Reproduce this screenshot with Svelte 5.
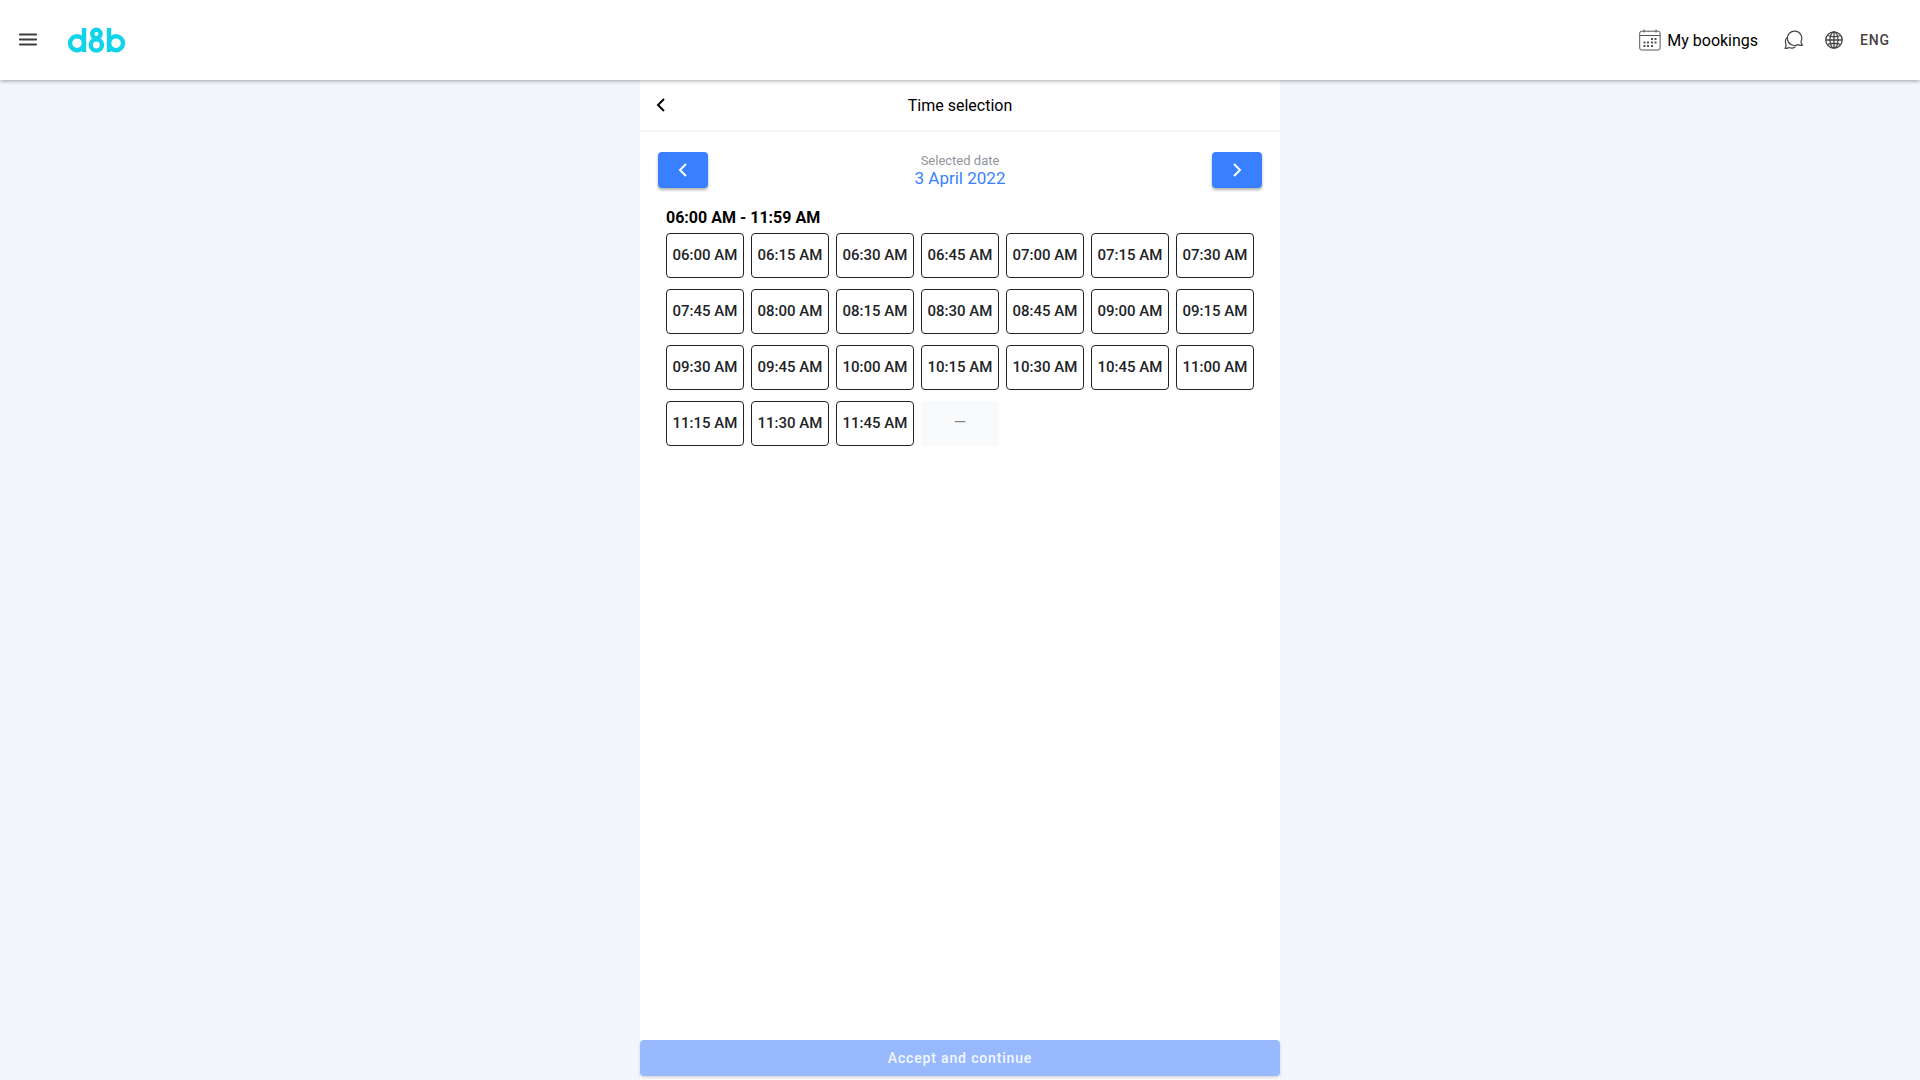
<script>
  let selected = $state(null);

  const slots = Array.from({ length: 24 }, (_, i) => {
    const minutes = 360 + i * 15;
    const hour = String(Math.floor(minutes / 60)).padStart(2, '0');
    const minute = String(minutes % 60).padStart(2, '0');
    return `${hour}:${minute} AM`;
  });
</script>

<div class="page">
  <header>
    <button class="icon-button menu" aria-label="Menu">
      <svg width="20" height="16" viewBox="0 0 20 16"><path d="M2 2.500h16M2 7.500h16M2 12.500h16" stroke="#3c3c3b" stroke-width="2.2" stroke-linecap="round" /></svg>
    </button>
    <a class="logo" href="#home" aria-label="d8b">
      <svg width="60" height="28" viewBox="0 0 60 28" fill="none" stroke="#12d3ea" stroke-width="4.400">
        <circle cx="11" cy="17.200" r="7" />
        <path d="M18 2v24" />
        <circle cx="30.400" cy="8" r="4.200" />
        <circle cx="30.400" cy="19" r="5.600" />
        <circle cx="50" cy="17.200" r="7" />
        <path d="M43 2v24" />
      </svg>
    </a>
    <nav>
      <a class="bookings" href="#bookings">
        <svg width="22" height="22" viewBox="0 0 22 22" fill="none" stroke="#555">
          <rect x="0.7" y="2.2" width="20.4" height="18.8" rx="2" />
          <path d="M1 6.5h20M5 .5v3M17 .5v3" />
          <path d="M12 10h2M15.500 10h2M4.500 13.500h2M8 13.500h2M12 13.500h2M15.500 13.500h2M4.500 17h2M8 17h2M12 17h2" stroke-width="1.800" />
        </svg>
        <span>My bookings</span>
      </a>
      <button class="icon-button chat" aria-label="Messages">
        <svg width="20" height="20" viewBox="0 0 20 20" fill="none" stroke="#444" stroke-width="1.2" stroke-linejoin="round" stroke-linecap="round">
          <path d="M14 14.600A7.200 7.200 0 1 1 17 11.500Q16.900 13.700 18.500 15.200Q16 15.700 14 14.600Z" />
          <path d="M2.500 8Q.6 11 2 14.500Q2.400 16.600 1 18.300Q3.500 18.700 5.200 17.500Q8.300 18.800 11 17.200" />
        </svg>
      </button>
      <button class="language">
        <svg width="18" height="18" viewBox="0 0 18 18" fill="none" stroke="#444" stroke-width="1.3">
          <circle cx="9" cy="9" r="8.200" /><ellipse cx="9" cy="9" rx="4" ry="8.200" />
          <path d="M9 .8v16.400M.8 9h16.400M2.500 4.500Q9 7 15.500 4.500M2.500 13.500Q9 11 15.500 13.500" />
        </svg>
        <span>ENG</span>
      </button>
    </nav>
  </header>

  <main>
    <div class="title-bar">
      <button class="icon-button" aria-label="Back">
        <svg width="10" height="14" viewBox="0 0 10 14" fill="none" stroke="#000" stroke-width="2"><path d="M8 1 2 7l6 6" /></svg>
      </button>
      <h1>Time selection</h1>
    </div>

    <div class="date-bar">
      <button class="step" aria-label="Previous day">
        <svg width="10" height="14" viewBox="0 0 10 14" fill="none" stroke="#fff" stroke-width="2"><path d="M8 1 2 7l6 6" /></svg>
      </button>
      <div class="date">
        <span class="caption">Selected date</span>
        <span class="value">3 April 2022</span>
      </div>
      <button class="step" aria-label="Next day">
        <svg width="10" height="14" viewBox="0 0 10 14" fill="none" stroke="#fff" stroke-width="2"><path d="m2 1 6 6-6 6" /></svg>
      </button>
    </div>

    <section>
      <h2>06:00 AM - 11:59 AM</h2>
      <div class="slots">
        {#each slots as slot}
          <button class="slot" class:selected={selected === slot} onclick={() => (selected = slot)}>{slot}</button>
        {/each}
        <div class="slot empty">—</div>
      </div>
    </section>

    <button class="accept" disabled={!selected}>Accept and continue</button>
  </main>
</div>

<style>
  :global(body) { background: #f3f5fa; }
  .page {
    display: flex;
    flex-direction: column;
    min-height: 100vh;
    font-family: Roboto, sans-serif;
    font-size: 16px;
    color: #000;
  }
  button { font: inherit; color: inherit; border: 0; padding: 0; background: none; cursor: pointer; }
  a { color: inherit; text-decoration: none; }
  svg { display: block; }
  header {
    display: flex;
    align-items: center;
    height: 80px;
    box-sizing: border-box;
    padding: 0 30px 0 18px;
    background: #fff;
    box-shadow: 0 1px 4px rgba(0, 0, 0, 0.35);
    z-index: 1;
  }
  .logo { margin-left: 28px; }
  nav { display: flex; align-items: center; margin-left: auto; }
  .bookings { display: flex; align-items: center; gap: 6px; }
  .chat { margin-left: 26px; }
  .language {
    display: flex;
    align-items: center;
    gap: 17px;
    margin-left: 21px;
    font-size: 14px;
    font-weight: 500;
    letter-spacing: 0.06em;
    color: #444;
  }
  main {
    flex: 1;
    display: flex;
    flex-direction: column;
    width: 100%;
    max-width: 640px;
    box-sizing: border-box;
    margin: 0 auto;
    background: #fff;
  }
  .title-bar {
    display: grid;
    grid-template-columns: 30px 1fr 30px;
    align-items: center;
    height: 52px;
    box-sizing: border-box;
    padding: 0 6px;
    border-bottom: 2px solid #f3f5fa;
  }
  .title-bar .icon-button { justify-self: center; }
  h1, h2 { margin: 0; font-size: 16px; line-height: 20px; }
  h1 { padding-top: 2px; font-weight: 400; text-align: center; }
  .date-bar { display: flex; justify-content: space-between; align-items: center; padding: 20px 18px; }
  .step {
    display: grid;
    place-items: center;
    width: 50px;
    height: 36px;
    border-radius: 4px;
    background: #3880ff;
    box-shadow: 0 2px 3px rgba(0, 0, 0, 0.3);
  }
  .date { display: flex; flex-direction: column; align-items: center; }
  .caption { font-size: 13px; line-height: 16px; color: #92949c; }
  .value { font-size: 17px; line-height: 18px; color: #3880ff; }
  section { flex: 1; padding: 0 26px; }
  h2 { font-weight: 700; margin-bottom: 5px; }
  .slots { display: grid; grid-template-columns: repeat(7, 1fr); gap: 11px 7px; }
  .slot {
    display: grid;
    place-items: center;
    height: 45px;
    box-sizing: border-box;
    padding-bottom: 2px;
    border: 1px solid #222428;
    border-radius: 4px;
    font-size: 15px;
    font-weight: 500;
    color: #222428;
    white-space: nowrap;
  }
  .selected { background: #3880ff; color: #fff; }
  .empty { border: 0; background: #f9fafc; color: #888; font-size: 16px; font-weight: 400; }
  .accept {
    height: 36px;
    margin-bottom: 4px;
    border-radius: 4px;
    background: #3880ff;
    color: #fff;
    font-size: 14px;
    font-weight: 500;
    letter-spacing: 0.06em;
    box-shadow: 0 2px 3px rgba(0, 0, 0, 0.3);
  }
  .accept:disabled { background: #98b9fd; color: #f3f7ff; box-shadow: 0 2px 3px rgba(0, 0, 0, 0.15); cursor: default; }
</style>
